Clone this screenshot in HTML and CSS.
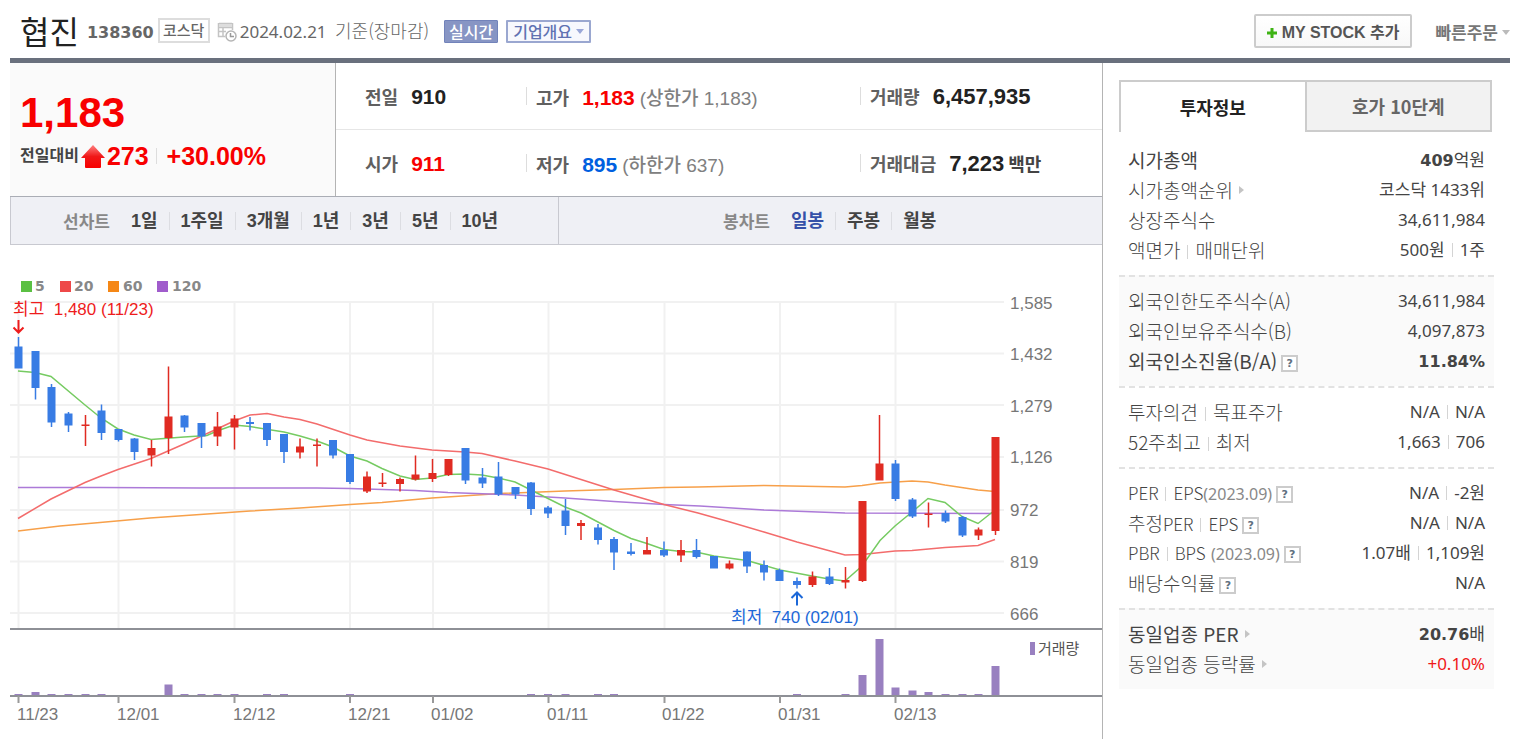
FILE: index.html
```html
<!DOCTYPE html>
<html lang="ko">
<head>
    <meta charset="UTF-8">
    <meta name="viewport" content="width=device-width, initial-scale=1.0">
    <title>협진 138360</title>
    <link rel="stylesheet" href="styles.css">
</head>
<body>
    <header class="stock-header">
        <h1>협진</h1>
        <strong class="code">138360</strong>
        <span class="market">코스닥</span>
        <svg class="date-icon" width="20" height="20" viewBox="0 0 20 20" fill="none" stroke="#c4c4c4">
            <path d="M2 1.5h13M1.500 1v13.500H8M15.500 1v7M2 5.500h13M2 9.500h7M6 5v9" stroke-width="1.500"/>
            <rect x="2" y="2" width="13" height="3" fill="#ddd" stroke="none"/>
            <circle cx="14" cy="14" r="5" fill="#fff" stroke="#b5b5b5" stroke-width="1.500"/>
            <path d="M13.500 11v3.500H17" stroke="#999" stroke-width="1.500"/>
        </svg>
        <span class="date">2024.02.21 <span class="basis">기준(장마감)</span></span>
        <button type="button" class="btn btn-live">실시간</button>
        <button type="button" class="btn btn-summary">기업개요<i class="arrow-down"></i></button>
        <div class="header-right">
            <button type="button" class="btn-mystock">
                <svg width="10" height="10" viewBox="0 0 10 10"><path d="M3.500 0h3v3.500H10v3H6.500V10h-3V6.500H0v-3h3.500z" fill="#3eb314"/></svg>
                MY STOCK 추가
            </button>
            <a href="#" class="quick-order">빠른주문<i class="arrow-down"></i></a>
        </div>
    </header>

    <div class="container">
        <main class="main">
            <section class="summary">
                <div class="today">
                    <p class="price">1,183</p>
                    <p class="change">
                        <span class="change-label">전일대비</span>
                        <svg width="24" height="23" viewBox="0 0 24 23">
                            <defs>
                                <linearGradient id="up" x1="0" y1="0" x2="0" y2="1">
                                    <stop offset="0" stop-color="#ff8080"/>
                                    <stop offset="0.500" stop-color="#f01818"/>
                                    <stop offset="1" stop-color="#f80000"/>
                                </linearGradient>
                            </defs>
                            <path d="M12 0L24 13H20V22Q20 23 19 23H5Q4 23 4 22V13H0z" fill="url(#up)"/>
                        </svg>
                        <span>273</span>
                        <span class="rate">+30.00%</span>
                    </p>
                </div>
                <table class="quote">
                    <tr>
                        <td class="col-prev"><span class="label">전일</span><b>910</b></td>
                        <td class="col-limit"><span class="label">고가</span><b class="up">1,183</b><span class="limit">(상한가 1,183)</span></td>
                        <td class="col-volume"><span class="label">거래량</span><b>6,457,935</b></td>
                    </tr>
                    <tr>
                        <td class="col-prev"><span class="label">시가</span><b class="up">911</b></td>
                        <td class="col-limit"><span class="label">저가</span><b class="down">895</b><span class="limit">(하한가 637)</span></td>
                        <td class="col-volume"><span class="label">거래대금</span><b>7,223</b><span class="unit">백만</span></td>
                    </tr>
                </table>
            </section>

            <nav class="chart-nav">
                <div class="nav-group">
                    <span class="nav-title">선차트</span>
                    <a href="#">1일</a><a href="#">1주일</a><a href="#">3개월</a><a href="#">1년</a><a href="#">3년</a><a href="#">5년</a><a href="#">10년</a>
                </div>
                <div class="nav-group candle">
                    <span class="nav-title">봉차트</span>
                    <a href="#" class="on">일봉</a><a href="#">주봉</a><a href="#">월봉</a>
                </div>
            </nav>

            <svg class="chart" viewBox="10 245 1092 494">
                <!-- grid -->
                <path class="grid" d="M10 302H1004M10 353.500H1004M10 405H1004M10 457H1004M10 510H1004M10 561.500H1004M10 613H1004"/>
                <path class="grid" d="M18.500 302V628M118.500 302V628M234.500 302V628M350 302V628M433 302V628M548.500 302V628M664.500 302V628M780 302V628M895.500 302V628"/>

                <!-- moving averages -->
                <polyline class="ma ma60" points="18,531 60,526 100,522.500 150,518 200,514.500 250,511 300,508 350,504.500 382,502.500 432,498 500,493.500 565,491 614,489.500 664,487.500 698,487 764,485.500 845,487 862,485.500 880,483 912,481 928,482 945,485 978,490 995,491.500"/>
                <polyline class="ma ma120" points="18,487.500 100,487.500 200,488 317,488 350,488.500 415,490.500 448,492.500 515,495 565,498 614,501.500 664,504.500 700,506 764,510 845,513 995,513.500"/>
                <polyline class="ma ma20" points="18,518.500 51,499 85,482.500 101,476 118,469.500 151,458.500 184,444 217,429 234,421 250,415 267,413.500 284,417 300,419.500 317,424 350,435 367,440 400,446 432,450 465,452 482,453.500 515,461 548,469 581,479.500 614,490 664,504.500 698,513 730,522 764,532 797,542 845,555 862,554.500 895,551 912,550.500 945,547.500 978,545.500 995,539.500"/>
                <polyline class="ma ma5" points="18,371 35,372.500 51,376.500 85,405 101,418 118,429 134,435 151,439.500 184,437 207,435.500 217,431 234,425 250,426.500 284,432 300,436 317,441 333,447 350,456 367,461 382,468.500 400,476 415,479.500 432,478 448,474.500 465,474 482,475 498,478 515,482 531,490 565,507 581,513 614,530.500 631,538.500 647,543.500 664,549.500 681,551.500 696,552 714,556 747,560.500 780,570 812,576 829,579 845,581 862,566 880,540.500 895,526 912,512 928,498.500 945,502.500 962,516.500 978,523.500 995,510"/>

                <!-- candles: wicks then bodies -->
                <path class="wick fall" d="M18.500 337V368M35.500 351V399.500M51.500 384V427M68.500 412V432M101.500 404.500V440M118.500 429V441.500M134.500 438V460M184.500 415V432M201.500 423V448M250 417V430.500M267 423V446M284 434V463M333 440V458.500M350 454V484M465.500 448V484M482.500 468V488M498.500 462V496M515.500 487V499M531 482V515M548 506V518M565.500 499V535M598 524V544.500M614 537V570M631 543V555.500M664 541.500V557M696.500 539V558.500M747 551.500V573M764 560.500V580.500M779.500 568.500V580.500M797 577.500V588.500M829.500 568V585M895.500 460V501M912.500 498V518M945.500 510.500V523M962.500 516V537"/>
                <path class="wick rise" d="M85.500 415V446M151.500 440V466.500M168.500 366.500V454M217.500 412V446M234.500 415V449.500M300 438.500V458.500M317 438.500V466.500M367 471.500V493M382.500 473V487M400 477.500V491.500M415.500 455.500V480.500M432.500 459V482M448.500 459V476M581 520V540M647 537V554M681 540V562M729.500 560.500V569.500M812.500 571.500V587M845.500 567V588.500M862.500 501V582M879.500 415V480M928.500 502.500V527.500M978.500 527.500V540M995.500 437V535"/>
                <path class="body fall" d="M18.500 346.500V368.500M35.500 351V388M51.500 387V422.500M68.500 413.500V425.500M101.500 410.500V433M118.500 429V440M134.500 438.500V452M184.500 415.500V427.500M201.500 423V436.500M250 422V424M267 423V440M284 434V452M333 440V455.500M350 454V482M465.500 448V480.500M482.500 477.500V483.500M498.500 476.500V494.500M515.500 487V494.500M531 482.500V509M548 507.500V513.500M565.500 510.500V526M598 527.500V540M614 539V552.500M631 551.500V554M664 550V555.500M696.500 550V557M714 556V568.500M747 551.500V566.500M764 565V572.500M779.500 570V581M797 581V585M829.500 576.500V584M895.500 463.500V499M912.500 499.500V516.500M945.500 513V521.500M962.500 517V535.500"/>
                <path class="body rise" d="M85.500 424.500V426M151.500 448V455.500M168.500 416.500V438M217.500 426.500V436.500M234.500 418.500V427.500M300 446.500V452.500M317 444.500V446M367 476.500V491.500M382.500 482.500V484M400 479V484M415.500 474.500V479.500M432.500 473V479M448.500 459V475M581 523V526M647 550V554.500M681 550V555.500M729.500 563.500V568.500M812.500 576.500V585M845.500 580V582.500M862.500 501V581M879.500 463.500V480.500M928.500 513.500V515M978.500 529.500V535.500M995.500 437V531"/>

                <!-- high / low marks -->
                <path class="mark high" d="M18.500 320V332M13.500 327.500L18.500 332.500L23.500 327.500"/>
                <text class="note high" x="13" y="315">최고&#160; 1,480 (11/23)</text>
                <path class="mark low" d="M797 605.500V593M791.500 598L797 592.500L802.500 598"/>
                <text class="note low" x="731" y="623">최저&#160; 740 (02/01)</text>

                <!-- legend -->
                <rect x="21" y="281" width="11" height="11" fill="#5bc043"/>
                <rect x="60" y="281" width="11" height="11" fill="#ee4848"/>
                <rect x="108" y="281" width="11" height="11" fill="#f58716"/>
                <rect x="157" y="281" width="11" height="11" fill="#a05ccc"/>
                <g class="legend">
                    <text x="35" y="291">5</text>
                    <text x="74" y="291">20</text>
                    <text x="123" y="291">60</text>
                    <text x="172" y="291">120</text>
                </g>

                <g class="axis">
                    <text x="1010" y="309">1,585</text>
                    <text x="1010" y="360">1,432</text>
                    <text x="1010" y="412">1,279</text>
                    <text x="1010" y="463">1,126</text>
                    <text x="1010" y="516">972</text>
                    <text x="1010" y="568">819</text>
                    <text x="1010" y="620">666</text>
                </g>

                <!-- volume -->
                <path class="volume" d="M18.500 694V696M35.500 692V696M51.500 694V696M68.500 694V696M85.500 694V696M101.500 694V696M168.500 684.500V696M184.500 694V696M201.500 694V696M217.500 694V696M234.500 694V696M267 694V696M284 694V696M350 694V696M531 694V696M548 694V696M565.500 694V696M598 694V696M614 694V696M797 694V696M845.500 694V696M862.500 675V696M879.500 639V696M895.500 687.500V696M912.500 690.500V696M928.500 692V696M945.500 694V696M962.500 694V696M978.500 694V696M995.500 666V696"/>
                <path class="frame" d="M10 629H1102M10 696H1102"/>
                <path class="tick" d="M18.500 696V703M118.500 696V703M234.500 696V703M350 696V703M433 696V703M548.500 696V703M664.500 696V703M780 696V703M895.500 696V703"/>
                <rect x="1030" y="642" width="5" height="13" fill="#9980c0"/>
                <text class="volume-label" x="1038" y="654">거래량</text>

                <g class="axis">
                    <text x="17" y="720">11/23</text>
                    <text x="117" y="720">12/01</text>
                    <text x="233" y="720">12/12</text>
                    <text x="348" y="720">12/21</text>
                    <text x="431" y="720">01/02</text>
                    <text x="547" y="720">01/11</text>
                    <text x="662" y="720">01/22</text>
                    <text x="778" y="720">01/31</text>
                    <text x="894" y="720">02/13</text>
                </g>
            </svg>
        </main>

        <aside class="side">
            <div class="tabs">
                <button type="button" class="tab active">투자정보</button>
                <button type="button" class="tab">호가 10단계</button>
            </div>

            <div class="group first">
                <table>
                    <tr class="strong"><th scope="row">시가총액</th><td><b>409</b>억원</td></tr>
                    <tr><th scope="row"><a href="#">시가총액순위<i class="arrow-right"></i></a></th><td>코스닥 1433위</td></tr>
                    <tr><th scope="row">상장주식수</th><td>34,611,984</td></tr>
                    <tr><th scope="row">액면가<i class="bar"></i>매매단위</th><td>500원<i class="bar"></i>1주</td></tr>
                </table>
            </div>
            <div class="group gray">
                <table>
                    <tr><th scope="row">외국인한도주식수(A)</th><td>34,611,984</td></tr>
                    <tr><th scope="row">외국인보유주식수(B)</th><td>4,097,873</td></tr>
                    <tr class="strong"><th scope="row">외국인소진율(B/A)<button type="button" class="help">?</button></th><td><b>11.84%</b></td></tr>
                </table>
            </div>
            <div class="group">
                <table>
                    <tr><th scope="row">투자의견<i class="bar"></i>목표주가</th><td>N/A<i class="bar"></i>N/A</td></tr>
                    <tr><th scope="row">52주최고<i class="bar"></i>최저</th><td>1,663<i class="bar"></i>706</td></tr>
                </table>
            </div>
            <div class="group">
                <table>
                    <tr><th scope="row"><span class="latin">PER<i class="bar"></i>EPS</span><span class="period">(2023.09)</span><button type="button" class="help">?</button></th><td>N/A<i class="bar"></i>-2원</td></tr>
                    <tr><th scope="row">추정<span class="latin">PER<i class="bar"></i>EPS</span><button type="button" class="help">?</button></th><td>N/A<i class="bar"></i>N/A</td></tr>
                    <tr><th scope="row"><span class="latin">PBR<i class="bar"></i>BPS</span> <span class="period">(2023.09)</span><button type="button" class="help">?</button></th><td>1.07배<i class="bar"></i>1,109원</td></tr>
                    <tr><th scope="row">배당수익률<button type="button" class="help">?</button></th><td>N/A</td></tr>
                </table>
            </div>
            <div class="group gray">
                <table>
                    <tr class="strong"><th scope="row"><a href="#">동일업종 PER<i class="arrow-right"></i></a></th><td><b>20.76</b>배</td></tr>
                    <tr><th scope="row"><a href="#">동일업종 등락률<i class="arrow-right"></i></a></th><td class="plus">+0.10%</td></tr>
                </table>
            </div>
        </aside>
    </div>
</body>
</html>
```

FILE: styles.css
```css
* {
    margin: 0;
    padding: 0;
    box-sizing: border-box;
}

body {
    padding: 0 18px 0 10px;
    background: #fff;
    color: #444;
    font-family: "Noto Sans", "Noto Sans CJK KR", sans-serif;
    font-size: 17px;
}

a {
    color: inherit;
    text-decoration: none;
}

button {
    font-family: "Noto Sans CJK KR", sans-serif;
    cursor: pointer;
}

/* header */
.stock-header {
    display: flex;
    align-items: center;
    height: 63px;
    padding: 2px 0 0 10px;
    border-bottom: 5px solid #69707d;
    white-space: nowrap;
}

.stock-header h1 {
    font-family: "Noto Sans CJK KR", sans-serif;
    font-size: 32px;
    font-weight: 400;
    line-height: 40px;
    color: #222;
}

.code {
    margin: 4px 4px 0 8px;
    font-family: "DejaVu Sans", sans-serif;
    font-size: 16px;
    color: #666;
}

.market {
    width: 52px;
    height: 25px;
    border: 2px solid #ddd;
    font-family: "Noto Sans CJK KR", sans-serif;
    font-size: 15px;
    font-weight: 500;
    line-height: 20px;
    text-align: center;
    color: #666;
}

.date-icon {
    margin: 4px 3px 0 7px;
}

.date {
    color: #666;
}

.basis {
    margin-left: 4px;
    font-family: "Noto Sans CJK KR", sans-serif;
    font-size: 18px;
    font-weight: 300;
}

.btn {
    height: 23px;
    margin-left: 8px;
    border: 1px solid #7283ba;
    border-radius: 1px;
    font-size: 16px;
    font-weight: 500;
    line-height: 20px;
}

.btn-live {
    width: 54px;
    margin: 2px 0 0 15px;
    background: #8795c4;
    color: #fff;
}

.btn-summary {
    width: 85px;
    margin-top: 2px;
    border: 2px solid #9aa7d0;
    background: #f7f8fd;
    line-height: 18px;
    color: #6072b2;
}

.arrow-down {
    display: inline-block;
    margin-left: 4px;
    border: 4px solid transparent;
    border-top: 5px solid #9aa7d8;
    border-bottom: 0;
    vertical-align: 4px;
}

.header-right {
    display: flex;
    align-items: center;
    margin: 2px 0 0 auto;
}

.btn-mystock {
    width: 158px;
    height: 34px;
    border: 2px solid #ccc;
    border-radius: 2px;
    background: linear-gradient(#fff, #f8f8f8);
    font-family: "Liberation Sans", "Noto Sans CJK KR", sans-serif;
    font-size: 16px;
    font-weight: 700;
    color: #555;
}

.quick-order {
    margin-left: 23px;
    font-family: "Noto Sans CJK KR", sans-serif;
    font-weight: 700;
    color: #777;
}

.quick-order .arrow-down {
    border-top-color: #bbb;
}

.container {
    display: flex;
}

.main {
    flex: 1;
    min-width: 0;
    border-right: 1px solid #b4b4b4;
}

/* price summary */
.summary {
    display: flex;
    height: 134px;
    border-bottom: 1px solid #aaadb5;
}

.today {
    width: 326px;
    padding: 22px 10px 0;
    border-right: 1px solid #b4b4b4;
    background: #fafafa;
    font-family: "Liberation Sans", "Noto Sans CJK KR", sans-serif;
    font-weight: 700;
    color: #f80000;
}

.price {
    font-size: 42px;
    line-height: 56px;
}

.change {
    display: flex;
    align-items: center;
    font-size: 25px;
    line-height: 30px;
}

.change svg {
    margin: 0 2px;
}

.change-label {
    font-size: 16px;
    color: #444;
}

.rate {
    margin-left: 7px;
    padding-left: 11px;
    background: linear-gradient(#ddd, #ddd) 0 50% / 1px 16px no-repeat;
}

.quote {
    flex: 1;
    border-collapse: collapse;
    table-layout: fixed;
    font-family: "Liberation Sans", "Noto Sans CJK KR", sans-serif;
    font-size: 21px;
    color: #222;
}

.quote td {
    height: 66px;
    white-space: nowrap;
}

.quote tr + tr td {
    border-top: 1px solid #e6e6e6;
}

.col-prev {
    width: 190px;
    padding-left: 29px;
}

.col-limit {
    width: 334px;
}

.col-limit,
.col-volume {
    padding-left: 10px;
    background: linear-gradient(#ddd, #ddd) 0 50% / 1px 18px no-repeat;
}

.quote .col-volume {
    font-size: 22px;
}

.label,
.unit {
    margin-right: 13px;
    font-size: 18px;
    font-weight: 700;
    color: #606060;
}

.unit {
    margin: 0 0 0 4px;
    color: #444;
}

.limit {
    margin-left: 5px;
    font-size: 19px;
    font-weight: 500;
    color: #808080;
}

.up {
    color: #f80000;
}

.down {
    color: #0060e0;
}

/* chart period links */
.chart-nav {
    display: grid;
    grid-template-columns: 548px 1fr;
    height: 48px;
    border-bottom: 1px solid #c8c9d0;
    border-left: 1px solid #c8c9d0;
    background: #eff0f5;
    font-family: "Liberation Sans", "Noto Sans CJK KR", sans-serif;
    font-size: 18px;
    font-weight: 700;
    color: #444;
}

.nav-group {
    display: flex;
    align-items: center;
    padding-left: 52px;
    border-right: 1px solid #c8c9d0;
}

.nav-group.candle {
    padding-left: 164px;
    border-right: 0;
}

.nav-title {
    margin-right: 10px;
    font-size: 17px;
    color: #888;
}

.nav-group a {
    padding: 0 11px;
    line-height: 18px;
}

.nav-group a + a {
    border-left: 1px solid #dcdde2;
}

.nav-group .on {
    color: #3550a8;
}

/* candle chart */
.chart {
    display: block;
    width: 100%;
    font-family: "Liberation Sans", "Noto Sans CJK KR", sans-serif;
    font-size: 17px;
}

.grid {
    stroke: #f1f1f1;
    stroke-width: 2;
}

.ma {
    fill: none;
    stroke-width: 1.5;
}

.ma5 {
    stroke: #76cb62;
}

.ma20 {
    stroke: #f36c6c;
}

.ma60 {
    stroke: #f7a04a;
}

.ma120 {
    stroke: #ac7ad8;
}

.wick {
    stroke-width: 1.5;
}

.body,
.volume {
    stroke-width: 8;
}

.rise {
    stroke: #e02b22;
}

.fall {
    stroke: #387ce4;
}

.mark {
    fill: none;
    stroke-width: 2;
}

.mark.high {
    stroke: #ee1c1c;
}

.mark.low {
    stroke: #1c68d8;
}

.note.high {
    fill: #ee1c1c;
}

.note.low {
    fill: #1c68d8;
}

.legend {
    font-family: "DejaVu Sans", sans-serif;
    font-size: 14px;
    font-weight: 700;
    fill: #888;
}

.axis {
    fill: #777;
}

.volume {
    stroke: #9980c0;
}

.volume-label {
    font-size: 15px;
    fill: #555;
}

.frame {
    stroke: #8e9096;
    stroke-width: 2;
}

.tick {
    stroke: #999;
    stroke-width: 2;
}

/* investment info */
.side {
    width: 407px;
    padding: 17px 16px 0;
}

.tabs {
    display: flex;
    margin: 0 2px 13px 0;
}

.tab {
    flex: 1;
    height: 52px;
    border: 2px solid #ccc;
    background: #f2f2f2;
    font-size: 18px;
    font-weight: 700;
    color: #666;
}

.tab.active {
    border-right: 0;
    border-bottom: 0;
    background: #fff;
    color: #222;
}

.group {
    padding: 9px 9px 10px;
    border-top: 2px dashed #e2e2e2;
}

.group.first {
    padding-top: 0;
    border-top: 0;
}

.group.gray {
    background: #fafafa;
}

.group table {
    width: 100%;
    border-collapse: collapse;
}

.group tr {
    height: 30px;
    line-height: 24px;
    white-space: nowrap;
}

.group th {
    font-family: "Noto Sans CJK KR", sans-serif;
    font-size: 19px;
    font-weight: 300;
    text-align: left;
}

.group td {
    text-align: right;
}

.group .strong th {
    font-weight: 400;
}

.group b {
    font-family: "DejaVu Sans", sans-serif;
    font-size: 16px;
}

.bar {
    display: inline-block;
    width: 1px;
    height: 14px;
    margin: 0 7px;
    background: #d4d4d4;
    vertical-align: -1px;
}

.arrow-right {
    display: inline-block;
    margin-left: 6px;
    border: 4px solid transparent;
    border-right: 0;
    border-left: 5px solid #c4c4c4;
    vertical-align: 4px;
}

.latin {
    font-size: 17px;
}

.period {
    font-family: "Noto Sans", sans-serif;
    font-size: 16px;
    font-weight: 400;
    color: #888;
}

.help {
    width: 17px;
    height: 17px;
    margin-left: 4px;
    border: 2px solid #ccc;
    background: #fff;
    font-family: "DejaVu Sans", sans-serif;
    font-size: 11px;
    font-weight: 700;
    line-height: 13px;
    color: #607080;
    vertical-align: 2px;
}

.plus {
    color: #f01818;
}
```
